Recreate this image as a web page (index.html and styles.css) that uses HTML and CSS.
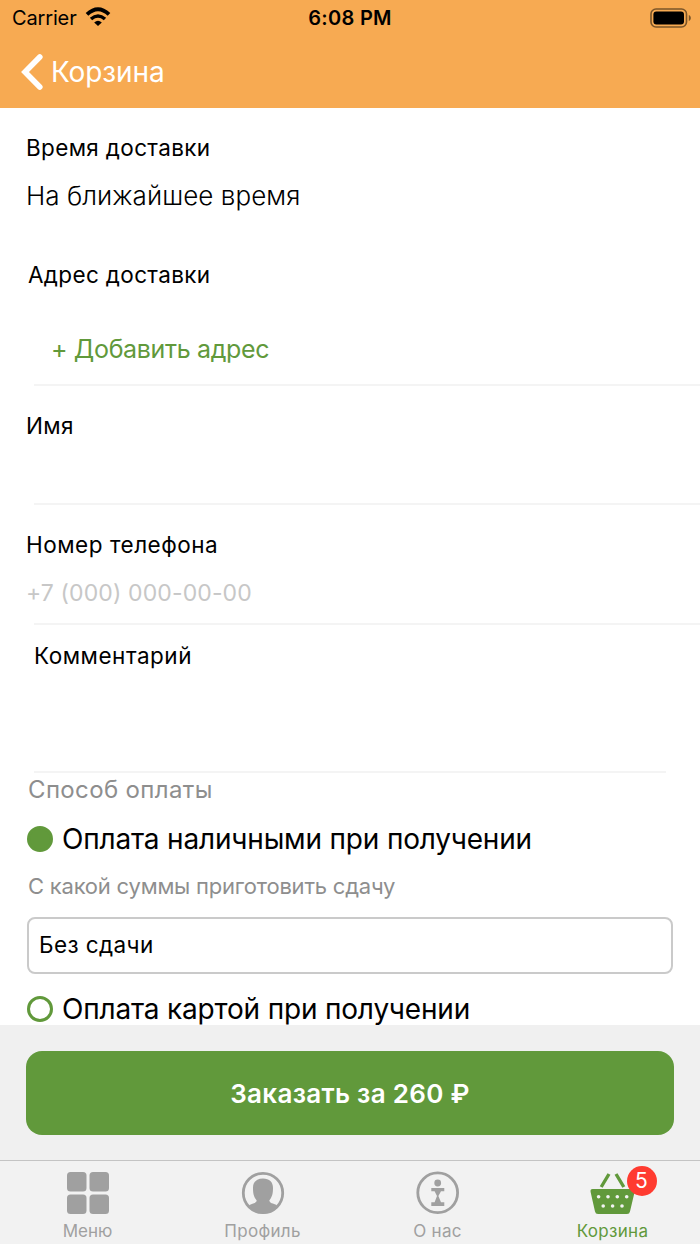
FILE: index.html
```html
<!DOCTYPE html>
<html lang="ru">
<head>
    <meta charset="UTF-8">
    <meta name="viewport" content="width=device-width, initial-scale=1.0">
    <title>Корзина</title>
    <link rel="stylesheet" href="styles.css">
</head>
<body>
    <div class="screen">
        <header class="header">
            <div class="status-bar">
                <div class="status-left">
                    <span class="carrier">Carrier</span>
                    <svg class="wifi" width="26" height="20" viewBox="0 0 26 20">
                        <path d="M2 7.4Q13 -3 24 7.4" fill="none" stroke="#000" stroke-width="3.8"/>
                        <path d="M6 12Q13 6 20 12" fill="none" stroke="#000" stroke-width="3.6"/>
                        <path d="M9.2 15.4Q13 12 16.8 15.4L13 19Z" fill="#000"/>
                    </svg>
                </div>
                <span class="time">6:08 PM</span>
                <div class="status-right">
                    <svg width="42" height="20" viewBox="0 0 42 20">
                        <rect x="1" y="1" width="35.5" height="18" rx="5" fill="none" stroke="#7b5529" stroke-width="1.6"/>
                        <rect x="3.4" y="3.6" width="30.6" height="12.8" rx="3" fill="#000"/>
                        <path d="M38.8 7C41.5 8 41.5 12 38.8 13Z" fill="#7b5529"/>
                    </svg>
                </div>
            </div>
            <div class="nav">
                <svg width="22" height="36" viewBox="0 0 22 36">
                    <path d="M18.800 3L4 18L18.800 33" fill="none" stroke="#fff" stroke-width="5.6" stroke-linecap="round"/>
                </svg>
                <span class="nav-title">Корзина</span>
            </div>
        </header>

        <main class="form">
            <section class="field field-time">
                <div class="label">Время доставки</div>
                <div class="value">На ближайшее время</div>
            </section>
            <section class="field field-address">
                <div class="label">Адрес доставки</div>
                <div class="add-address">+ Добавить адрес</div>
            </section>
            <section class="field field-name">
                <div class="label">Имя</div>
            </section>
            <section class="field field-phone">
                <div class="label label-wide">Номер телефона</div>
                <div class="placeholder">+7 (000) 000-00-00</div>
            </section>
            <section class="field field-comment">
                <div class="label label-wide">Комментарий</div>
            </section>

            <section class="payment">
                <div class="payment-title">Способ оплаты</div>
                <div class="option">
                    <span class="radio checked"></span>
                    <span>Оплата наличными при получении</span>
                </div>
                <div class="hint">С какой суммы приготовить сдачу</div>
                <div class="change-box"><span>Без сдачи</span></div>
                <div class="option">
                    <span class="radio"></span>
                    <span>Оплата картой при получении</span>
                </div>
            </section>
        </main>

        <div class="order">
            <button class="order-btn">Заказать за 260 ₽</button>
        </div>

        <nav class="tabs">
            <div class="tab">
                <svg width="44" height="44" viewBox="0 0 44 44" fill="#a0a0a0">
                    <rect x="1" y="1" width="19.5" height="19.5" rx="3.5"/>
                    <rect x="23.5" y="1" width="19.5" height="19.5" rx="3.5"/>
                    <rect x="1" y="23.5" width="19.5" height="19.5" rx="3.5"/>
                    <rect x="23.5" y="23.5" width="19.5" height="19.5" rx="3.5"/>
                </svg>
                <span class="tab-name tab-menu">Меню</span>
            </div>
            <div class="tab">
                <svg width="44" height="44" viewBox="0 0 44 44">
                    <circle cx="22" cy="22" r="19.7" fill="none" stroke="#a0a0a0" stroke-width="2.8"/>
                    <path d="M22 7.5C28.5 7.5 32 11 32 17C32 23 31 26 28.3 29.5C28.6 32 32 32.5 36 34.2C32.5 39.5 27.5 42.5 22 42.5C16.5 42.5 11.5 39.5 8 34.2C12 32.5 15.4 32 15.7 29.5C13 26 12 23 12 17C12 11 15.5 7.5 22 7.5Z" fill="#a0a0a0"/>
                </svg>
                <span class="tab-name">Профиль</span>
            </div>
            <div class="tab">
                <svg width="44" height="44" viewBox="0 0 44 44" fill="#a0a0a0">
                    <circle cx="21.7" cy="21.8" r="19.9" fill="none" stroke="#a0a0a0" stroke-width="2.8"/>
                    <circle cx="21.7" cy="12" r="3.4"/>
                    <path d="M15.300 17H28.300V20.200H25L22.400 25L25 31.300H28.300V35H15.300V31.300H18.600L21 25L18.600 20.200H15.300Z"/>
                </svg>
                <span class="tab-name">О нас</span>
            </div>
            <div class="tab active">
                <div class="basket">
                    <svg width="46" height="44" viewBox="0 0 46 44">
                        <path d="M11.2 16L19 3M33.800 16L26 3" fill="none" stroke="#61993b" stroke-width="3.4"/>
                        <path d="M2.600 18H42.600Q45.200 18 44.600 21L40 40.500Q39.500 43 37 43H8Q5.500 43 5 40.500L.6 21Q0 18 2.600 18Z" fill="#61993b"/>
                        <g fill="#f2f2f2">
                            <circle cx="8.600" cy="25.700" r="1.800"/><circle cx="18" cy="25.700" r="1.800"/><circle cx="27.300" cy="25.700" r="1.800"/><circle cx="36.700" cy="25.700" r="1.800"/>
                            <circle cx="13.200" cy="35" r="1.800"/><circle cx="22.600" cy="35" r="1.800"/><circle cx="32" cy="35" r="1.800"/>
                        </g>
                    </svg>
                    <span class="badge">5</span>
                </div>
                <span class="tab-name">Корзина</span>
            </div>
        </nav>
    </div>
</body>
</html>
```
FILE: styles.css
```css
* {
    box-sizing: border-box;
}

body {
    margin: 0;
    background-color: #fff;
    color: #000;
    font-family: "Inter", "Liberation Sans", sans-serif;
}

svg {
    display: block;
    flex-shrink: 0;
}

.screen {
    display: flex;
    flex-direction: column;
    width: 700px;
    height: 1244px;
    overflow: hidden;
    white-space: nowrap;
}

.header {
    height: 108px;
    background-color: #f7aa52;
}

.status-bar {
    display: grid;
    grid-template-columns: 1fr auto 1fr;
    align-items: center;
    height: 36px;
    padding: 0 8px;
    font-size: 20px;
}

.status-left {
    display: flex;
    align-items: center;
    gap: 8px;
    padding-left: 4px;
}

.carrier {
    letter-spacing: -0.15px;
}

.wifi {
    margin-bottom: 3px;
}

.time {
    font-weight: 600;
    letter-spacing: 0.3px;
}

.status-right {
    display: flex;
    justify-content: flex-end;
}

.nav {
    display: flex;
    align-items: center;
    gap: 8px;
    height: 72px;
    padding-left: 21px;
    color: #fff;
    font-size: 28px;
    letter-spacing: -0.1px;
}

.form {
    height: 917px;
    overflow: hidden;
}

.field {
    padding-left: 26px;
    line-height: 30px;
}

.label {
    font-size: 22.5px;
    letter-spacing: 0.35px;
}

.label-wide {
    letter-spacing: 0.52px;
}

.field-time {
    height: 127px;
    padding-top: 25px;
}

.value {
    margin-top: 18px;
    font-size: 26px;
    font-weight: 300;
    letter-spacing: 0.05px;
}

/* dividers start a bit to the right of the labels */
.field-address,
.field-name,
.field-phone,
.field-comment {
    background: linear-gradient(#f4f4f4, #f4f4f4) 34px 100% / 100% 2px no-repeat;
}

.field-address {
    height: 151px;
    padding-top: 25px;
    padding-left: 28px;
}

.add-address {
    margin-top: 44px;
    padding-left: 23px;
    color: #61993b;
    font-size: 25px;
    letter-spacing: -0.35px;
}

.field-name {
    height: 119px;
    padding-top: 25px;
}

.field-phone {
    height: 120px;
    padding-top: 25px;
}

.placeholder {
    margin-top: 18px;
    color: #c7c7c7;
    font-size: 23px;
    letter-spacing: 0.12px;
}

.field-comment {
    height: 148px;
    padding-top: 16px;
    padding-left: 34px;
    background-size: 632px 2px;
}

.payment {
    padding: 0 27px;
}

.payment-title {
    height: 32px;
    padding-left: 1px;
    font-size: 24px;
    line-height: 34px;
    letter-spacing: 0.35px;
    color: #8e8e8e;
}

.option {
    display: flex;
    align-items: center;
    gap: 9px;
    height: 68px;
    font-size: 28px;
    letter-spacing: -0.18px;
}

.radio {
    width: 26px;
    height: 26px;
    border: 3px solid #61993b;
    border-radius: 50%;
}

.radio.checked {
    background-color: #61993b;
}

.hint {
    height: 44px;
    padding-left: 1px;
    font-size: 22px;
    line-height: 27px;
    letter-spacing: -0.22px;
    color: #8e8e8e;
}

.change-box {
    display: flex;
    align-items: center;
    height: 57px;
    margin-bottom: 1px;
    padding: 0 0 2px 10px;
    border: 2px solid #cacaca;
    border-radius: 8px;
    font-size: 22.5px;
    letter-spacing: 0.4px;
}

.order {
    height: 135px;
    padding: 26px;
    background-color: #f0f0f0;
}

.order-btn {
    display: block;
    width: 100%;
    height: 84px;
    border: none;
    border-radius: 16px;
    background-color: #61993b;
    color: #fff;
    font-family: inherit;
    font-size: 26px;
    font-weight: 600;
    letter-spacing: 0.3px;
}

.tabs {
    display: grid;
    grid-template-columns: repeat(4, 1fr);
    height: 84px;
    padding-top: 10px;
    border-top: 1px solid #c4c4c4;
    background-color: #f2f2f2;
}

.tab {
    display: flex;
    flex-direction: column;
    align-items: center;
    gap: 5px;
    color: #a0a0a0;
}

.tab-name {
    font-size: 17px;
    line-height: 22px;
    letter-spacing: 0.3px;
}

.tab-menu {
    letter-spacing: 0;
}

.tab.active {
    color: #61993b;
}

.basket {
    position: relative;
}

.badge {
    position: absolute;
    top: -5px;
    left: 37px;
    width: 30px;
    height: 30px;
    border-radius: 50%;
    background-color: #ff3b30;
    color: #fff;
    font-size: 21px;
    line-height: 30px;
    text-align: center;
}
```
